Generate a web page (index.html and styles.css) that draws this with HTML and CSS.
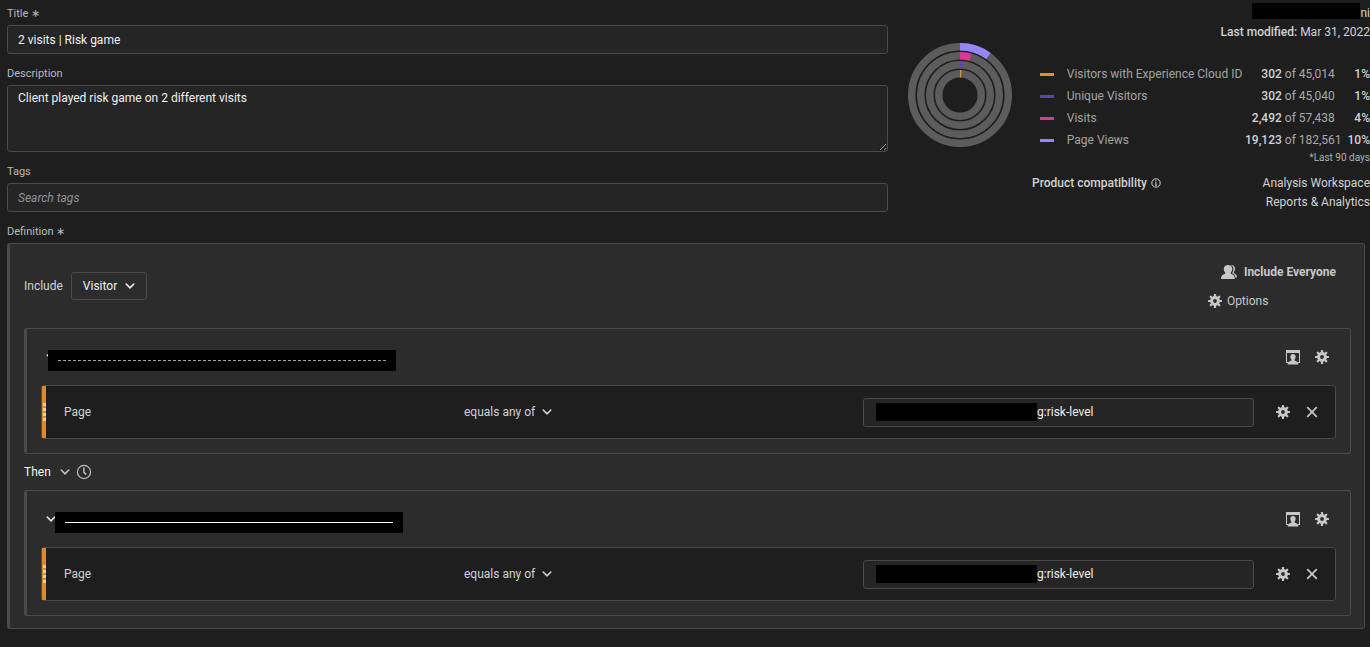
FILE: index.html
```html
<!DOCTYPE html>
<html lang="en">
<head>
    <meta charset="UTF-8">
    <meta name="viewport" content="width=device-width, initial-scale=1">
    <title>Segment builder</title>
    <link rel="stylesheet" href="styles.css">
</head>
<body>

<!-- shared icons -->
<svg class="sprite" aria-hidden="true">
    <symbol id="chevron" viewBox="0 0 10 10">
        <path d="M1.2 3l3.8 3.9L8.8 3" fill="none" stroke="currentColor" stroke-width="1.6" stroke-linecap="round"/>
    </symbol>
    <symbol id="gear" viewBox="0 0 14 14">
        <g fill="currentColor">
            <rect x="5.9" y="0" width="2.2" height="14" rx=".6"/>
            <rect x="5.9" y="0" width="2.2" height="14" rx=".6" transform="rotate(45 7 7)"/>
            <rect x="5.9" y="0" width="2.2" height="14" rx=".6" transform="rotate(90 7 7)"/>
            <rect x="5.9" y="0" width="2.2" height="14" rx=".6" transform="rotate(135 7 7)"/>
        </g>
        <circle class="gear-hole" cx="7" cy="7" r="3.4" stroke="currentColor" stroke-width="3"/>
    </symbol>
    <symbol id="cross" viewBox="0 0 12 12">
        <path d="M1.700 1.700l8.600 8.600M10.300 1.700l-8.600 8.600" stroke="currentColor" stroke-width="1.700" stroke-linecap="round"/>
    </symbol>
    <symbol id="container" viewBox="0 0 16 16">
        <path d="M1 1h14v13h-2.500v-1H14V4H2v9h1.500v1H1z" fill="currentColor"/>
        <path d="M8 5c1.700 0 2.700 1.100 2.700 2.800 0 1.200-.5 2.100-1.100 2.700v1c1.800.5 3.600 1.400 3.800 4H2.600c.2-2.600 2-3.500 3.800-4v-1c-.6-.6-1.100-1.500-1.100-2.700C5.300 6.100 6.300 5 8 5z" fill="currentColor"/>
    </symbol>
    <symbol id="people" viewBox="0 0 16 16">
        <path d="M10 1.200c2.500-.4 4 1.100 4 3.400 0 1.600-.5 2.600-1.200 3.500v1.200c1.800.5 3.200 1.400 3.200 4.200h-1.700c-.2-2.500-1.500-3.500-3.200-4.200V8.700c.8-.9 1.300-2 1.300-3.600 0-1.900-.9-3.200-2.400-3.900z" fill="currentColor"/>
        <path d="M7 1c2.600 0 4.200 1.600 4.200 4 0 1.500-.6 2.700-1.400 3.500v1.300c2 .6 3.900 1.500 4 5.200H0c.1-3.700 2-4.600 4.200-5.200V8.500C3.400 7.700 2.800 6.500 2.800 5c0-2.400 1.600-4 4.200-4z" fill="currentColor"/>
    </symbol>
</svg>

<div class="top">
    <form class="fields">
        <div class="field">
            <label for="title">Title <span class="star">∗</span></label>
            <input id="title" class="textfield" type="text" value="2 visits | Risk game">
        </div>
        <div class="field">
            <label for="description">Description</label>
            <textarea id="description" class="textfield">Client played risk game on 2 different visits</textarea>
        </div>
        <div class="field">
            <label for="tags">Tags</label>
            <input id="tags" class="textfield" type="text" placeholder="Search tags">
        </div>
        <div class="definition-label">Definition <span class="star">∗</span></div>
    </form>

    <aside class="summary">
        <div class="owner"><span class="redacted"></span>ni</div>
        <div class="modified"><b>Last modified:</b> Mar 31, 2022</div>
        <div class="preview">
            <svg class="donut" viewBox="0 0 104 104">
                <g fill="none" stroke-width="7.400" transform="rotate(-90 52 52)">
                    <g stroke="#5c5c5c">
                        <circle cx="52" cy="52" r="48.300"/>
                        <circle cx="52" cy="52" r="39.300"/>
                        <circle cx="52" cy="52" r="30.300"/>
                        <circle cx="52" cy="52" r="21.300"/>
                    </g>
                    <circle cx="52" cy="52" r="48.300" stroke="#9488f8" pathLength="100" stroke-dasharray="10 90"/>
                    <circle cx="52" cy="52" r="39.300" stroke="#dc3793" pathLength="100" stroke-dasharray="4.300 95.700"/>
                    <circle cx="52" cy="52" r="30.300" stroke="#5745bb" pathLength="100" stroke-dasharray="1 99"/>
                    <circle cx="52" cy="52" r="21.300" stroke="#e0912f" pathLength="100" stroke-dasharray="1 99"/>
                </g>
            </svg>
            <table class="legend">
                <tr><td><i class="key orange"></i></td><th>Visitors with Experience Cloud ID</th><td class="count">302</td><td class="total">of 45,014</td><td class="percent">1%</td></tr>
                <tr><td><i class="key indigo"></i></td><th>Unique Visitors</th><td class="count">302</td><td class="total">of 45,040</td><td class="percent">1%</td></tr>
                <tr><td><i class="key pink"></i></td><th>Visits</th><td class="count">2,492</td><td class="total">of 57,438</td><td class="percent">4%</td></tr>
                <tr><td><i class="key violet"></i></td><th>Page Views</th><td class="count">19,123</td><td class="total">of 182,561</td><td class="percent">10%</td></tr>
            </table>
        </div>
        <div class="note">*Last 90 days</div>
        <div class="compat">
            <b>Product compatibility</b>
            <svg class="info" viewBox="0 0 10 10">
                <circle cx="5" cy="5" r="4.200" fill="none" stroke="currentColor"/>
                <path d="M4.200 4.400H5v2.800M4.100 7.200h1.800M5 2.300v1.100" fill="none" stroke="currentColor"/>
            </svg>
            <div class="products">Analysis Workspace<br>Reports &amp; Analytics</div>
        </div>
    </aside>
</div>

<main class="definition">
    <div class="definition-head">
        <label for="scope">Include</label>
        <span class="picker boxed">
            <select id="scope"><option>Visitor</option></select>
            <svg class="chevron"><use href="#chevron"/></svg>
        </span>
        <div class="actions">
            <button class="action everyone" type="button"><svg class="icon-16"><use href="#people"/></svg>Include Everyone</button>
            <button class="action" type="button"><svg class="icon-14"><use href="#gear"/></svg>Options</button>
        </div>
    </div>

    <section class="container">
        <div class="container-head">
            <button class="toggle" type="button" aria-label="Collapse"><svg class="chevron"><use href="#chevron"/></svg></button>
            <span class="redacted-name faint"></span>
            <button class="icon-button" type="button" aria-label="Container"><svg class="icon-16"><use href="#container"/></svg></button>
            <button class="icon-button" type="button" aria-label="Options"><svg class="icon-14"><use href="#gear"/></svg></button>
        </div>
        <div class="rule">
            <span class="grip"><i></i><i></i><i></i><i></i></span>
            <label class="rule-name" for="value-1">Page</label>
            <span class="picker operator">
                <select aria-label="Operator"><option>equals any of</option></select>
                <svg class="chevron"><use href="#chevron"/></svg>
            </span>
            <span class="value">
                <input id="value-1" class="textfield" type="text" value="g:risk-level">
                <span class="mask"></span>
            </span>
            <button class="icon-button" type="button" aria-label="Options"><svg class="icon-14"><use href="#gear"/></svg></button>
            <button class="icon-button" type="button" aria-label="Remove"><svg class="icon-12"><use href="#cross"/></svg></button>
        </div>
    </section>

    <div class="then">
        <span class="picker sequence">
            <select aria-label="Sequence"><option>Then</option></select>
            <svg class="chevron"><use href="#chevron"/></svg>
        </span>
        <button class="clock" type="button" aria-label="Time limit">
            <svg viewBox="0 0 16 16">
                <circle cx="8" cy="8" r="6.600" fill="none" stroke="currentColor" stroke-width="1.200"/>
                <path d="M7.900 3.500v4.800l2.300 2.300" fill="none" stroke="currentColor" stroke-width="1.500"/>
            </svg>
        </button>
    </div>

    <section class="container">
        <div class="container-head">
            <button class="toggle" type="button" aria-label="Collapse"><svg class="chevron"><use href="#chevron"/></svg></button>
            <span class="redacted-name shifted"></span>
            <button class="icon-button" type="button" aria-label="Container"><svg class="icon-16"><use href="#container"/></svg></button>
            <button class="icon-button" type="button" aria-label="Options"><svg class="icon-14"><use href="#gear"/></svg></button>
        </div>
        <div class="rule">
            <span class="grip"><i></i><i></i><i></i><i></i></span>
            <label class="rule-name" for="value-2">Page</label>
            <span class="picker operator">
                <select aria-label="Operator"><option>equals any of</option></select>
                <svg class="chevron"><use href="#chevron"/></svg>
            </span>
            <span class="value">
                <input id="value-2" class="textfield" type="text" value="g:risk-level">
                <span class="mask"></span>
            </span>
            <button class="icon-button" type="button" aria-label="Options"><svg class="icon-14"><use href="#gear"/></svg></button>
            <button class="icon-button" type="button" aria-label="Remove"><svg class="icon-12"><use href="#cross"/></svg></button>
        </div>
    </section>
</main>

</body>
</html>
```
FILE: styles.css
```css
* {
    box-sizing: border-box;
}

body {
    margin: 0;
    padding: 6px 0 16px 7px;
    background-color: #1e1e1e;
    color: #d2d2d2;
    font-family: Roboto, "Liberation Sans", sans-serif;
    font-size: 12px;
    line-height: 16px;
}

input,
textarea,
select,
button {
    font: inherit;
    color: inherit;
}

button {
    display: flex;
    align-items: center;
    padding: 0;
    border: 0;
    background: none;
    cursor: pointer;
}

b {
    font-weight: 500;
}

.sprite {
    display: none;
}

.top {
    display: flex;
    align-items: flex-start;
}

.fields {
    flex: 1;
    display: flex;
    flex-direction: column;
    gap: 12px;
}

.field label,
.definition-label {
    display: block;
    height: 16px;
    margin-bottom: 3px;
    font-size: 11px;
    color: #b9b9b9;
}

.star {
    font-size: 11px;
    line-height: 1;
}

.textfield {
    display: block;
    width: 100%;
    height: 29px;
    padding: 0 10px;
    border: 1px solid #4a4a4a;
    border-radius: 3px;
    background-color: #252525;
    color: #f0f0f0;
}

textarea.textfield {
    height: 67px;
    padding: 4px 10px;
    resize: vertical;
}

.textfield::placeholder {
    color: #929292;
    font-style: italic;
}

/* right side summary */
.summary {
    width: 482px;
    padding-left: 20px;
}

.owner,
.modified {
    display: flex;
    justify-content: flex-end;
    gap: 3px;
}

.owner {
    margin-top: -3px;
    height: 21px;
    line-height: 20px;
    gap: 0;
}

.redacted {
    width: 108px;
    height: 16px;
    background-color: #000;
}

.preview {
    display: flex;
    align-items: flex-start;
    margin-top: 3px;
}

.donut {
    width: 104px;
    height: 104px;
}

.legend {
    flex: 1;
    margin: 20px 0 0 28px;
    border-collapse: collapse;
}

.legend td,
.legend th {
    height: 22px;
    padding: 0;
    white-space: nowrap;
}

.legend th {
    width: 176px;
    color: #a3a3a3;
    font-weight: 400;
    text-align: left;
}

.legend .count,
.legend .percent {
    font-weight: 500;
    text-align: right;
}

.legend .count {
    width: 39px;
}

.legend .total {
    padding-left: 3px;
    color: #a9a9a9;
}

.key {
    display: block;
    width: 14px;
    height: 3px;
    margin-right: 11px;
}

.orange {
    background-color: #e0912f;
}

.indigo {
    background-color: #5745bb;
}

.pink {
    background-color: #dc3793;
}

.violet {
    background-color: #9488f8;
}

.note {
    font-size: 10px;
    line-height: 14px;
    text-align: right;
    color: #b0b0b0;
}

.compat {
    display: flex;
    margin: 9px 0 0 124px;
    line-height: 19px;
}

.info {
    width: 10px;
    height: 10px;
    margin: 4px 0 0 4px;
}

.products {
    margin-left: auto;
    text-align: right;
}

/* definition */
.definition {
    margin-right: 5px;
    padding: 18px 13px 12px 14px;
    border: 1px solid #4a4a4a;
    border-left-width: 3px;
    border-radius: 3px;
    background-color: #2c2c2c;
}

.definition-head {
    display: flex;
    align-items: center;
    height: 48px;
    margin-bottom: 18px;
}

.picker {
    position: relative;
    display: inline-flex;
    align-items: center;
}

.picker select {
    padding: 0;
    border: 0;
    background: none;
    appearance: none;
    cursor: pointer;
}

.picker .chevron {
    position: absolute;
    right: 0;
    pointer-events: none;
}

.chevron {
    width: 10px;
    height: 10px;
}

.boxed {
    width: 76px;
    height: 28px;
    margin-left: 8px;
    border: 1px solid #4a4a4a;
    border-radius: 3px;
    color: #f0f0f0;
}

.boxed select {
    width: 100%;
    height: 100%;
    padding-left: 11px;
}

.boxed .chevron {
    right: 11px;
}

.actions {
    display: flex;
    flex-direction: column;
    gap: 8px;
    margin-left: auto;
    margin-right: 15px;
}

.action {
    gap: 5px;
    height: 21px;
    color: #c8c8c8;
}

.action.everyone {
    gap: 7px;
    margin-left: 13px;
    font-weight: 700;
}

.icon-16 {
    width: 16px;
    height: 16px;
}

.icon-14 {
    width: 14px;
    height: 14px;
}

.icon-12 {
    width: 12px;
    height: 12px;
}

.gear-hole {
    fill: #2c2c2c;
}

.container {
    padding: 0 14px 14px;
    border: 1px solid #4a4a4a;
    border-left-width: 3px;
    border-radius: 3px;
}

.container-head {
    display: flex;
    align-items: center;
    height: 56px;
}

.toggle {
    margin: 0 -8px 0 5px;
    color: #e4e4e4;
}

.redacted-name {
    position: relative;
    display: flex;
    align-items: center;
    width: 348px;
    height: 21px;
    margin: 7px auto 0 0;
    padding: 0 10px;
    background-color: #000;
}

.redacted-name.shifted {
    margin-left: 7px;
}

.redacted-name::before {
    content: "";
    flex: 1;
    border-top: 1px solid #fff;
}

.redacted-name.faint::before {
    border-top: 1px dashed #a0a0a0;
}

.icon-button {
    justify-content: center;
    width: 29px;
    height: 29px;
    color: #c8c8c8;
}

.rule {
    display: flex;
    align-items: center;
    height: 54px;
    padding-right: 9px;
    border: 1px solid #4a4a4a;
    border-radius: 3px;
    background-color: #1e1e1e;
}

.grip {
    display: flex;
    flex-direction: column;
    align-items: center;
    justify-content: center;
    gap: 2px;
    width: 4px;
    height: 100%;
    margin-right: 18px;
    background-color: #e0892a;
}

.grip i {
    width: 3px;
    height: 3px;
    background-color: #f5cf9d;
}

.rule-name {
    flex: 1;
}

.operator select {
    width: 88px;
}

.operator {
    margin-right: 311px;
}

.value {
    position: relative;
    flex: 0 1 391px;
    margin-right: 14px;
}

.value .textfield {
    padding-left: 173px;
}

.mask {
    position: absolute;
    top: 5px;
    left: 13px;
    width: 161px;
    height: 18px;
    background-color: #000;
}

.then {
    display: flex;
    align-items: center;
    height: 36px;
    color: #f0f0f0;
}

.sequence select {
    width: 46px;
}

.sequence .chevron {
    color: #c0c0c0;
}

.clock {
    margin-left: 6px;
    color: #c0c0c0;
}

.clock svg {
    width: 16px;
    height: 16px;
}
```
